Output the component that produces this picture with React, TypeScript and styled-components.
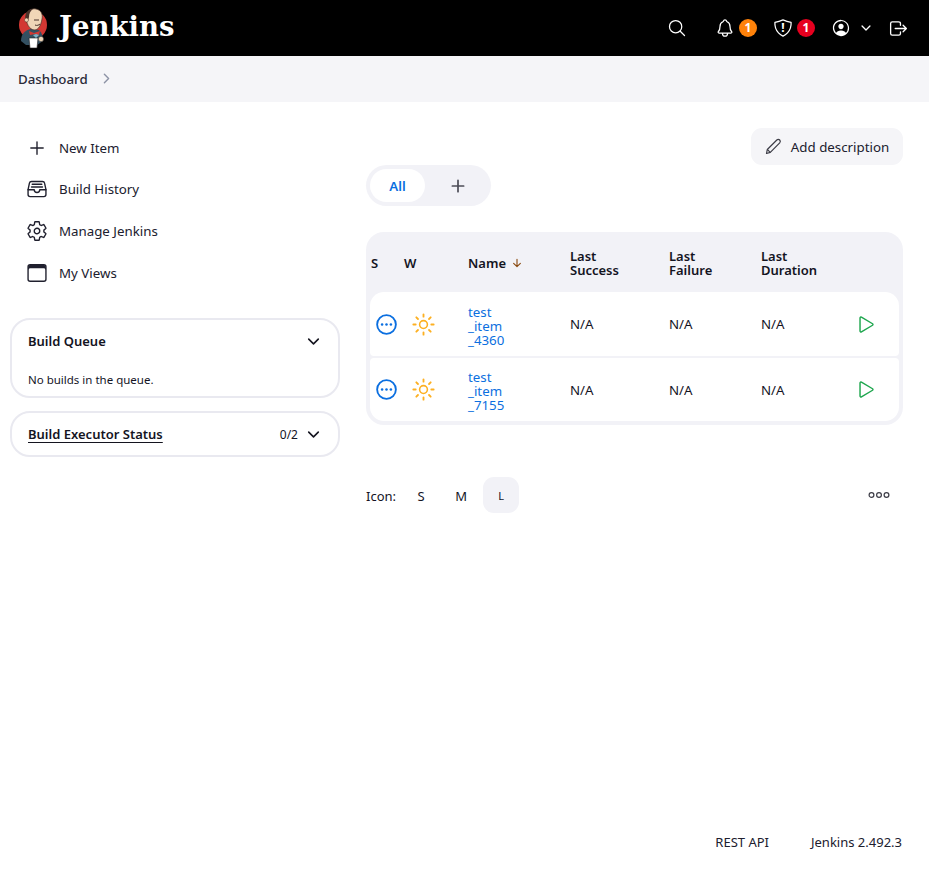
import React from "react";
import styled, { createGlobalStyle } from "styled-components";
import {
   IoAddOutline,
   IoArrowDownOutline,
   IoBrowsersOutline,
   IoChevronDownOutline,
   IoChevronForwardOutline,
   IoEllipsisHorizontalCircleOutline,
   IoFileTrayFullOutline,
   IoLogOutOutline,
   IoNotificationsOutline,
   IoPersonCircleOutline,
   IoPlayOutline,
   IoSearchOutline,
   IoSettingsOutline,
   IoShieldOutline,
   IoSunnyOutline,
} from "react-icons/io5";

const GlobalStyle = createGlobalStyle`
   html, body {
      margin: 0;
      padding: 0;
      background: #fff;
      color: #14141f;
      font-family: "Noto Sans", "Open Sans", sans-serif;
      font-size: 13.3px;
   }
   * { box-sizing: border-box; }
`;

const Page = styled.div`
   width: 929px;
   height: 873px;
   display: flex;
   flex-direction: column;
   overflow: hidden;
`;

const Header = styled.header`
   height: 56px;
   flex: none;
   background: #000;
   color: #fff;
   display: flex;
   align-items: center;
   padding: 0 20px 0 18px;
`;

const Brand = styled.div`
   display: flex;
   align-items: center;
   gap: 11px;
   flex: 1;
`;

const BrandName = styled.span`
   font-family: "DejaVu Serif", serif;
   font-weight: 700;
   font-size: 27.5px;
   line-height: 1;
   margin-top: -3px;
`;

const HeaderAction = styled.div<{ $left?: number; $size?: number }>`
   display: flex;
   align-items: center;
   gap: 4px;
   margin-left: ${({ $left }) => $left ?? 0}px;
   font-size: ${({ $size }) => $size ?? 20}px;
   line-height: 0;
   position: relative;
`;

const Count = styled.span<{ $color: string }>`
   width: 18px;
   height: 18px;
   border-radius: 50%;
   background: ${({ $color }) => $color};
   color: #fff;
   font-size: 12px;
   font-weight: 700;
   line-height: 18px;
   text-align: center;
`;

const ShieldMark = styled.span`
   position: absolute;
   left: 0;
   top: 0;
   width: 20px;
   height: 19px;
   font-size: 12px;
   font-weight: 700;
   line-height: 19px;
   text-align: center;
`;

const Breadcrumbs = styled.nav`
   height: 46px;
   flex: none;
   background: #f5f5f8;
   display: flex;
   align-items: center;
   padding: 0 0 1px 18px;
   gap: 11px;
   font-weight: 500;
   color: #2a2a38;
   & svg {
      color: #8d93a6;
      font-size: 15px;
   }
`;

const Body = styled.div`
   flex: 1;
   display: flex;
   padding: 25px 26px 0 10px;
   gap: 26px;
`;

const Sidebar = styled.aside`
   width: 330px;
   flex: none;
`;

const Tasks = styled.ul`
   list-style: none;
   margin: 0 0 24.4px;
   padding: 0;
`;

const Task = styled.li`
   height: 41.6px;
   padding-left: 16px;
   display: flex;
   align-items: center;
   gap: 11px;
   color: #20202e;
   & svg {
      font-size: 22px;
      flex: none;
   }
`;

const Panel = styled.section`
   border: 2px solid #e9e9f0;
   border-radius: 20px;
   padding: 0 16px;
   margin-bottom: 13px;
`;

const PanelHead = styled.div`
   height: 42px;
   padding-top: 1px;
   display: flex;
   align-items: center;
   justify-content: space-between;
   & svg {
      font-size: 17px;
   }
`;

const PanelTitle = styled.span<{ $underline?: boolean }>`
   font-size: 13px;
   font-weight: 600;
   color: #14141f;
   text-decoration: ${({ $underline }) => ($underline ? "underline" : "none")};
   text-underline-offset: 3px;
`;

const PanelMeta = styled.span`
   display: flex;
   align-items: center;
   gap: 7px;
   font-size: 12px;
`;

const PanelNote = styled.p`
   margin: 0;
   padding: 9px 0 7px;
   font-size: 11.5px;
   line-height: 18px;
`;

const Main = styled.main`
   width: 537px;
   flex: none;
   padding-top: 1px;
`;

const Actions = styled.div`
   display: flex;
   justify-content: flex-end;
`;

const AddButton = styled.button`
   height: 37px;
   width: 152px;
   border: 0;
   border-radius: 11px;
   background: #f5f5f8;
   color: #20202e;
   font: inherit;
   display: flex;
   align-items: center;
   justify-content: center;
   gap: 9px;
   padding: 0;
`;

const TabBar = styled.div`
   width: 125px;
   height: 41px;
   padding: 4px;
   border-radius: 21px;
   background: #f2f2f7;
   display: flex;
   align-items: center;
`;

const ActiveTab = styled.span`
   width: 55px;
   height: 33px;
   border-radius: 17px;
   background: #fff;
   color: #0b6fe0;
   font-weight: 600;
   display: flex;
   align-items: center;
   justify-content: center;
`;

const AddTab = styled.span`
   flex: 1;
   padding-left: 4px;
   display: flex;
   justify-content: center;
   font-size: 20px;
   color: #4d4d58;
   & svg * {
      stroke-width: 44;
   }
`;

const Table = styled.div`
   margin-top: 26px;
   padding: 0 4px 4px;
   border-radius: 18px;
   background: #f2f2f7;
`;

const columns = "34px 64px 102px 99px 92px 84px 42px";

const HeadRow = styled.div`
   height: 60px;
   padding-top: 2px;
   display: grid;
   grid-template-columns: ${columns};
   align-items: center;
   font-weight: 600;
   font-size: 13px;
   line-height: 14px;
   color: #14141f;
`;

const HeadCell = styled.div<{ $offset?: number }>`
   padding-left: ${({ $offset }) => $offset ?? 0}px;
   display: flex;
   align-items: center;
   gap: 5px;
   & svg {
      font-size: 12px;
      color: #8a4b12;
   }
`;

const Row = styled.div<{ $last?: boolean }>`
   height: ${({ $last }) => ($last ? 63 : 64)}px;
   margin-bottom: ${({ $last }) => ($last ? 0 : 2)}px;
   display: grid;
   grid-template-columns: ${columns};
   align-items: center;
   background: #fff;
   border-radius: ${({ $last }) => ($last ? "4px 4px 14px 14px" : "14px 14px 4px 4px")};
   color: #14141f;
`;

const StatusIcon = styled.span<{ $color: string; $offset: number }>`
   display: flex;
   margin-left: ${({ $offset }) => $offset}px;
   color: ${({ $color }) => $color};
   font-size: 25px;
   & svg path {
      stroke-width: 38;
   }
`;

const JobLink = styled.a`
   padding-top: 3px;
   color: #0b6fe0;
   line-height: 14px;
   text-decoration: none;
`;

const BuildAction = styled.span`
   display: flex;
   justify-content: center;
   color: #1ea64e;
   font-size: 23px;
`;

const Toolbar = styled.div`
   margin-top: 52px;
   height: 36px;
   display: flex;
   align-items: center;
   gap: 4px;
   font-size: 13px;
`;

const SizeOption = styled.span<{ $active?: boolean }>`
   width: 36px;
   height: 36px;
   padding-top: 1px;
   border-radius: 11px;
   display: flex;
   align-items: center;
   justify-content: center;
   font-size: ${({ $active }) => ($active ? 11 : 13)}px;
   background: ${({ $active }) => ($active ? "#f2f2f7" : "transparent")};
`;

const SizeLabel = styled.span`
   margin: 1px 3px 0 0;
`;

const More = styled.span`
   margin-left: auto;
   margin-right: 13px;
   display: flex;
`;

const Footer = styled.footer`
   flex: none;
   height: 62px;
   padding: 0 27px 0 0;
   display: flex;
   align-items: center;
   justify-content: flex-end;
   gap: 42px;
   font-size: 13px;
   color: #20202e;
`;

const ButlerLogo = () => (
   <svg width="30" height="42" viewBox="0 0 30 42" aria-hidden="true">
      <circle cx="15" cy="18" r="14" fill="#d33833" />
      <path d="M3 34c0-7 4-11 10-12l8 1c3 3 4 6 4 11l-6 4H8z" fill="#335061" />
      <path d="M8 9c1-5 5-8 10-7 5 1 7 5 6 10-1 6-3 10-7 11-6 0-9-7-9-14z" fill="#f0d6b7" stroke="#49322a" strokeWidth="0.7" />
      <path d="M8 14C6 8 9 2 15 2c-3 2-4 5-4 8l-1 4z" fill="#49322a" />
      <circle cx="8.5" cy="13" r="2" fill="#f0d6b7" stroke="#49322a" strokeWidth="0.5" />
      <path d="M16 13h5M17 18c2 1 4 0 5-1" stroke="#49322a" strokeWidth="1" fill="none" />
      <path d="M11 24l5 2 6-2-1 4-4-1-5 1z" fill="#d33833" />
      <path d="M11 31h9l-1 10h-7z" fill="#fff" stroke="#231f20" strokeWidth="0.6" />
      <circle cx="23" cy="32" r="2.6" fill="#f0d6b7" stroke="#231f20" strokeWidth="0.4" />
      <path d="M15 28l3-1 3 1-3 3z" fill="#81b0c4" />
   </svg>
);

const PencilIcon = () => (
   <svg width="17" height="17" viewBox="0 0 17 17" fill="none" stroke="#3c3c46" strokeWidth="1.2" strokeLinejoin="round" aria-hidden="true">
      <path d="M1.5 15.5l.8-4L11.8 2c.9-.9 2.1-.9 2.9 0s.8 2 0 2.9L5.3 14.4z" />
      <path d="M2.3 11.5l3 2.9" />
   </svg>
);

const DotsIcon = () => (
   <svg width="22" height="8" viewBox="0 0 22 8" fill="none" stroke="#3c3c46" strokeWidth="1.2" aria-hidden="true">
      <circle cx="3.5" cy="4" r="2.4" />
      <circle cx="11" cy="4" r="2.4" />
      <circle cx="18.5" cy="4" r="2.4" />
   </svg>
);

const jobs = [
   { id: "_4360" },
   { id: "_7155" },
];

export default function App() {
   return (
      <Page>
         <GlobalStyle />
         <Header>
            <Brand>
               <ButlerLogo />
               <BrandName>Jenkins</BrandName>
            </Brand>
            <HeaderAction>
               <IoSearchOutline />
            </HeaderAction>
            <HeaderAction $left={28}>
               <IoNotificationsOutline />
               <Count $color="#fe820a">1</Count>
            </HeaderAction>
            <HeaderAction $left={16}>
               <IoShieldOutline />
               <ShieldMark>!</ShieldMark>
               <Count $color="#e6001f">1</Count>
            </HeaderAction>
            <HeaderAction $left={16}>
               <IoPersonCircleOutline />
            </HeaderAction>
            <HeaderAction $left={8}>
               <IoChevronDownOutline size={14} />
            </HeaderAction>
            <HeaderAction $left={15} $size={21}>
               <IoLogOutOutline />
            </HeaderAction>
         </Header>
         <Breadcrumbs>
            Dashboard
            <IoChevronForwardOutline />
         </Breadcrumbs>
         <Body>
            <Sidebar>
               <Tasks>
                  <Task><IoAddOutline />New Item</Task>
                  <Task><IoFileTrayFullOutline />Build History</Task>
                  <Task><IoSettingsOutline />Manage Jenkins</Task>
                  <Task><IoBrowsersOutline />My Views</Task>
               </Tasks>
               <Panel>
                  <PanelHead>
                     <PanelTitle>Build Queue</PanelTitle>
                     <IoChevronDownOutline />
                  </PanelHead>
                  <PanelNote>No builds in the queue.</PanelNote>
               </Panel>
               <Panel>
                  <PanelHead>
                     <PanelTitle $underline>Build Executor Status</PanelTitle>
                     <PanelMeta>0/2 <IoChevronDownOutline /></PanelMeta>
                  </PanelHead>
               </Panel>
            </Sidebar>
            <Main>
               <Actions>
                  <AddButton><PencilIcon />Add description</AddButton>
               </Actions>
               <TabBar>
                  <ActiveTab>All</ActiveTab>
                  <AddTab><IoAddOutline /></AddTab>
               </TabBar>
               <Table>
                  <HeadRow>
                     <HeadCell $offset={1}>S</HeadCell>
                     <HeadCell>W</HeadCell>
                     <HeadCell>Name <IoArrowDownOutline /></HeadCell>
                     <HeadCell>Last<br />Success</HeadCell>
                     <HeadCell>Last<br />Failure</HeadCell>
                     <HeadCell>Last<br />Duration</HeadCell>
                     <HeadCell />
                  </HeadRow>
                  {jobs.map((job, i) => (
                     <Row key={job.id} $last={i === jobs.length - 1}>
                        <StatusIcon $color="#0b6fe0" $offset={4}>
                           <IoEllipsisHorizontalCircleOutline />
                        </StatusIcon>
                        <StatusIcon $color="#fdb022" $offset={7}>
                           <IoSunnyOutline />
                        </StatusIcon>
                        <JobLink href="#">test<br />_item<br />{job.id}</JobLink>
                        <span>N/A</span>
                        <span>N/A</span>
                        <span>N/A</span>
                        <BuildAction><IoPlayOutline /></BuildAction>
                     </Row>
                  ))}
               </Table>
               <Toolbar>
                  <SizeLabel>Icon:</SizeLabel>
                  <SizeOption>S</SizeOption>
                  <SizeOption>M</SizeOption>
                  <SizeOption $active>L</SizeOption>
                  <More><DotsIcon /></More>
               </Toolbar>
            </Main>
         </Body>
         <Footer>
            <span>REST API</span>
            <span>Jenkins 2.492.3</span>
         </Footer>
      </Page>
   );
}
